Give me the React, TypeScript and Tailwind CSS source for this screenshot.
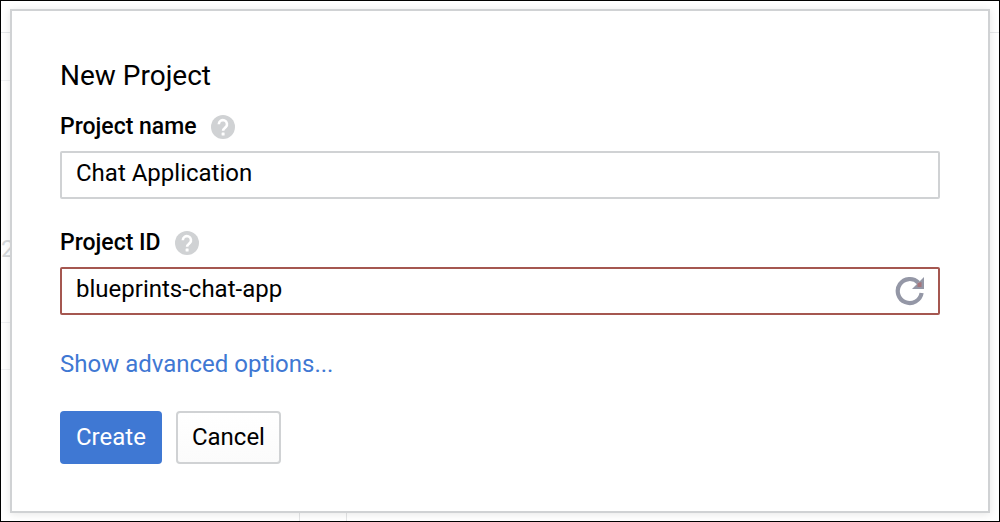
import { useState } from 'react';
import type { ReactNode } from 'react';

function HelpIcon() {
  return (
    <svg viewBox="0 0 24 24" className="size-6" aria-hidden="true">
      <circle cx="12" cy="12" r="12" fill="#d0d2d4" />
      <path
        d="M7.800 9.200a4.100 4.100 0 1 1 7 2.900c-1.500 1.300-2.700 1.900-2.700 3.700"
        fill="none"
        stroke="#fff"
        strokeWidth="2.600"
      />
      <rect x="10.600" y="17.500" width="3" height="3" rx="0.500" fill="#fff" />
    </svg>
  );
}

function RefreshIcon() {
  return (
    <svg viewBox="0 0 30 30" className="h-[30px] w-[30px]" aria-hidden="true">
      <path d="M23.500 6.800A12 12 0 1 0 26.600 17" fill="none" stroke="#9497a6" strokeWidth="4.200" />
      <path d="M29 1v12H17z" fill="#9497a6" />
      <path d="M26.500 6v5H22.500v-4z" fill="#a5757b" />
    </svg>
  );
}

function FieldLabel({ id, children }: { id: string; children: ReactNode }) {
  return (
    <div className="flex items-center gap-[14px]">
      <label htmlFor={id} className="text-[23px] leading-6 font-medium">
        {children}
      </label>
      <button type="button" aria-label="Help">
        <HelpIcon />
      </button>
    </div>
  );
}

function Backdrop() {
  return (
    <div className="absolute inset-0 overflow-hidden text-[#d5d7d9]" aria-hidden="true">
      <div className="absolute inset-x-0 top-[31px] h-px bg-[#e6e8ea]" />
      <div className="absolute top-[79px] left-0 h-px w-3 bg-[#f0f1f3]" />
      <span className="absolute top-[232px] left-0 text-2xl leading-8">2</span>
      <div className="absolute top-[321px] left-0 h-12 w-4 border-y border-[#f0f1f3]" />
      <div className="absolute bottom-0 left-[298px] h-2 w-12 border-x border-[#e4e5e6]" />
    </div>
  );
}

export default function App() {
  const [name, setName] = useState('Chat Application');
  const [projectId, setProjectId] = useState('blueprints-chat-app');

  return (
    <div className="relative flex min-h-screen flex-col border border-black bg-white px-[9px] py-2 font-['Roboto',sans-serif] text-black">
      <Backdrop />
      <main
        role="dialog"
        aria-labelledby="dialog-title"
        className="relative flex-1 border-2 border-[#d0d2d4] bg-white px-12 pt-12 shadow-[0_1px_8px_rgba(0,0,0,0.1)]"
      >
        <form onSubmit={(e) => e.preventDefault()}>
          <h1 id="dialog-title" className="mb-[22px] text-[28px] leading-[34px]">
            New Project
          </h1>

          <FieldLabel id="project-name">Project name</FieldLabel>
          <input
            id="project-name"
            value={name}
            onChange={(e) => setName(e.target.value)}
            className="mt-3 mb-8 block h-12 w-full rounded-[2px] border-2 border-[#d0d2d4] px-[14px] pb-1 text-2xl outline-none"
          />

          <FieldLabel id="project-id">Project ID</FieldLabel>
          <div className="mt-3 flex h-12 items-center rounded-[2px] border-2 border-[#a55750] pr-[13px] pl-[14px]">
            <input
              id="project-id"
              value={projectId}
              onChange={(e) => setProjectId(e.target.value)}
              className="h-full min-w-0 flex-1 pb-1 text-2xl outline-none"
            />
            <button type="button" aria-label="Generate a new ID">
              <RefreshIcon />
            </button>
          </div>

          <div className="my-8 pt-[2px] text-2xl leading-[30px] text-[#3f78d3]">
            <a href="#advanced">Show advanced options...</a>
          </div>

          <div className="flex gap-[14px] text-2xl leading-8">
            <button type="submit" className="h-[53px] rounded-[4px] bg-[#3f78d3] px-4 pb-[2px] text-white">
              Create
            </button>
            <button
              type="button"
              className="h-[53px] rounded-[4px] border-2 border-[#d0d2d4] bg-linear-to-b from-white to-[#fbfbfb] px-[14px] pb-[2px]"
            >
              Cancel
            </button>
          </div>
        </form>
      </main>
    </div>
  );
}
